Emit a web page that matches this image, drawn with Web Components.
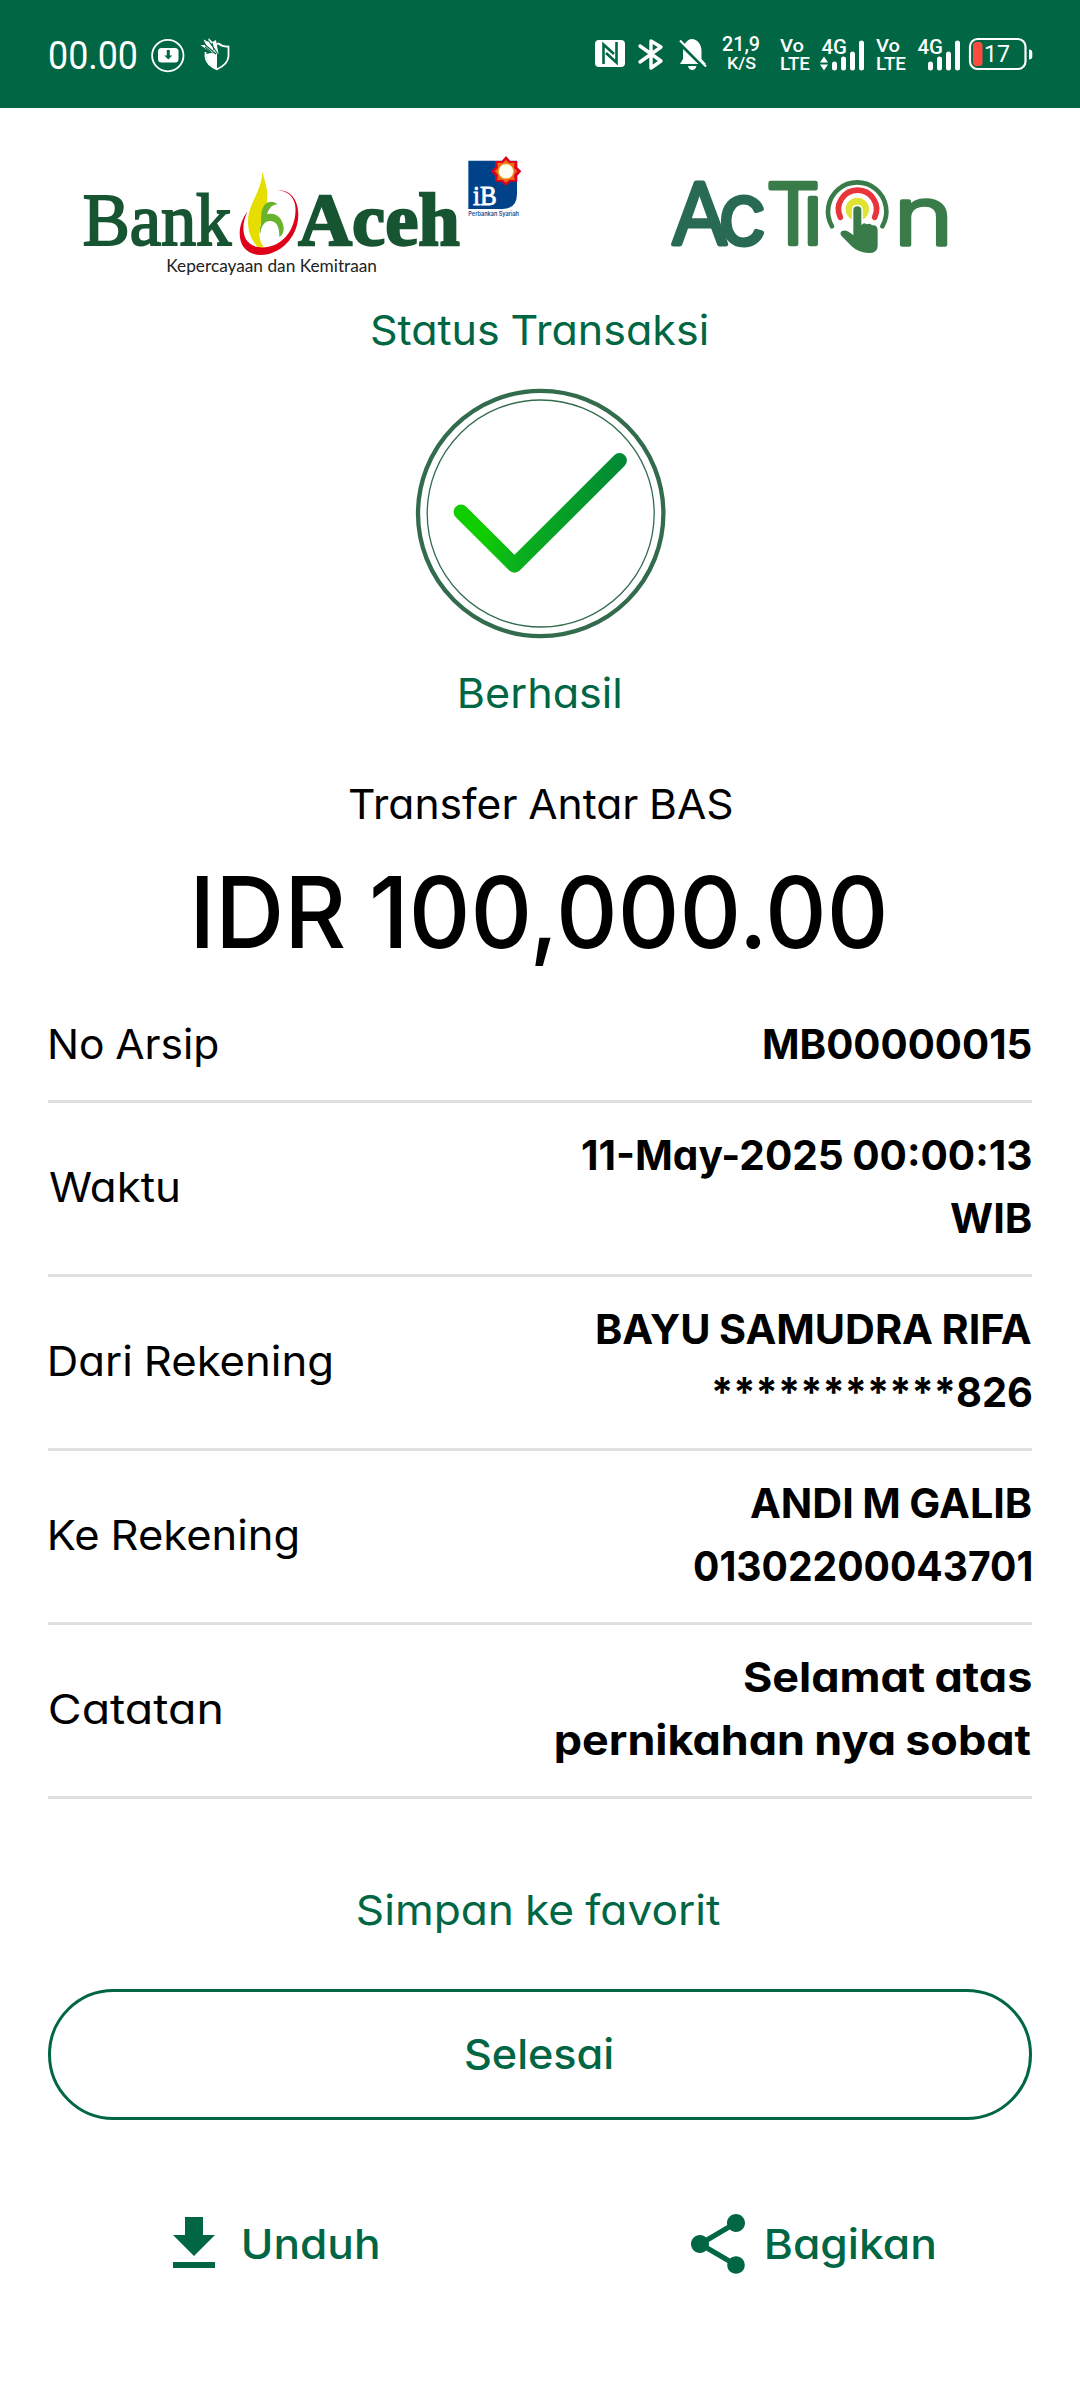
<!DOCTYPE html>
<html lang="id">
<head>
<meta charset="utf-8">
<title>Status Transaksi</title>
<style>
html,body{margin:0;padding:0;background:#fff}
body{width:1080px;height:2400px;overflow:hidden;font-family:Inter,"Open Sans",sans-serif;color:#000}
</style>
</head>
<body>
<receipt-page></receipt-page>
<script>
const define=(name,html,ready)=>customElements.define(name,class extends HTMLElement{
  constructor(){super();this.attachShadow({mode:'open'}).innerHTML=html;}
  connectedCallback(){if(ready)ready.call(this,this.shadowRoot);}
});

/* One line of text whose visible ink spans exactly the given width. */
const ctx=document.createElement('canvas').getContext('2d');
class FitLine extends HTMLElement{
  constructor(){
    super();
    this.attachShadow({mode:'open'}).innerHTML=`<style>
      :host{display:block;flex:none;line-height:63px;white-space:nowrap;font-feature-settings:"cv11" 1;word-spacing:-.03em}
      span{display:inline-block;transform-origin:0 0}
    </style><span></span>`;
  }
  connectedCallback(){
    const s=this.shadowRoot.querySelector('span');
    s.textContent=this.getAttribute('text');
    const size=this.getAttribute('size')||'41',weight=this.getAttribute('weight')||'400',w=+this.getAttribute('w');
    this.style.fontSize=size+'px';
    this.style.fontWeight=weight;
    this.style.width=w+'px';
    if(this.hasAttribute('lh'))this.style.lineHeight=this.getAttribute('lh')+'px';
    ctx.font=`${weight} ${size}px Inter, "Open Sans", sans-serif`;
    const m=ctx.measureText(s.textContent),left=-m.actualBoundingBoxLeft;
    const ink=s.offsetWidth-(m.width-m.actualBoundingBoxRight-m.actualBoundingBoxLeft);
    s.style.transform=`scaleX(${w/ink}) translateX(${-left}px)`;
  }
}
customElements.define('fit-line',FitLine);

define('status-bar',`<style>
:host{display:flex;justify-content:space-between;height:108px;background:#006644}
svg{display:block;font-family:Roboto,sans-serif;fill:#fff}
</style>
<svg width="260" height="108" viewBox="0 0 260 108">
 <text x="48" y="69" font-size="38" textLength="90" lengthAdjust="spacingAndGlyphs">00.00</text>
 <circle cx="167.8" cy="55.6" r="15.7" fill="none" stroke="#fff" stroke-width="1.8"/>
 <rect x="158" y="48" width="20.500" height="14.500" rx="3.5"/>
 <path d="M166.8 50h3v5.500h2.4l-3.9 4-3.9-4h2.4z" fill="#006644"/>
 <path d="M205.500 52v5q1 8 11.500 12.300q11-5 11.500-13V46.500q-6 .5-10-3l-2 .7" fill="none" stroke="#fff" stroke-width="1.8" stroke-linejoin="round"/>
 <path d="M206 54l5-1 6 .5V69q-10-4-11-13z"/>
 <path d="M200.500 45l5.500 0-2.500-5.500 5 2.500 0-4 4 4 3.500-2 2.500 14-8-2-6-4z"/>
 <path d="M203 43l13 11M208.500 40.500l9 13M212 43l2 7M205 47l6 5" stroke="#006644" stroke-width="1.100"/>
</svg>
<svg width="520" height="108" viewBox="0 0 520 108">
 <rect x="35" y="40" width="30" height="27" rx="4"/>
 <path d="M43.500 64V44.500L54 54M56.500 42v20.500L46 53" fill="none" stroke="#006644" stroke-width="2.600"/>
 <path d="M80 46l21 15-10 7V41l10 6-21 15" fill="none" stroke="#fff" stroke-width="3.400" stroke-linejoin="round" stroke-linecap="round"/>
 <path d="M120 64l3-5v-8c0-6 4-12 9-12s9.500 5 9.500 12v8l4.500 5zM128 66h8.500q-1 4-4.250 4t-4.250-4z"/>
 <path d="M118.500 41.500L145 67.500" stroke="#006644" stroke-width="4.500"/>
 <path d="M120 40.500L146 66.500" stroke="#fff" stroke-width="2.200"/>
 <g font-weight="500">
 <text x="162" y="51" font-size="20" textLength="38" lengthAdjust="spacingAndGlyphs">21,9</text>
 <text x="167" y="69" font-size="16" textLength="29" lengthAdjust="spacingAndGlyphs">K/S</text>
 <text x="220" y="52" font-size="18.500" textLength="24" lengthAdjust="spacingAndGlyphs">Vo</text>
 <text x="220" y="70" font-size="18.500" textLength="30" lengthAdjust="spacingAndGlyphs">LTE</text>
 <text x="261.500" y="53.500" font-size="20" textLength="25.500" lengthAdjust="spacingAndGlyphs">4G</text>
 <text x="316" y="52" font-size="18.500" textLength="24" lengthAdjust="spacingAndGlyphs">Vo</text>
 <text x="316" y="70" font-size="18.500" textLength="30" lengthAdjust="spacingAndGlyphs">LTE</text>
 <text x="357.500" y="53.500" font-size="20" textLength="25.500" lengthAdjust="spacingAndGlyphs">4G</text>
 </g>
 <path d="M260 62.500h8l-4-6zM260 64.500h8l-4 6z"/>
 <path d="M274.500 64v4M283.500 59v9M292.500 54v14M301.500 43v25M370.500 64v4M379.500 59v9M388.500 54v14M397.500 43v25" stroke="#fff" stroke-width="5" stroke-linecap="round"/>
 <rect x="410" y="39" width="55.500" height="30" rx="7.500" fill="none" stroke="#fff" stroke-width="2.200"/>
 <rect x="413" y="42" width="9.500" height="24" rx="3.500" fill="#fe4a3f"/>
 <path d="M469 49.500q3.300 0 3.300 3v4q0 3-3.300 3z"/>
 <text x="424" y="62" font-size="23" textLength="26" lengthAdjust="spacingAndGlyphs">17</text>
</svg>`);

define('bank-logo',`<style>:host{display:block}svg{display:block}</style>
<svg width="480" height="150" viewBox="0 0 1440 450">
 <g font-family="'Liberation Serif',serif" fill="#175532" stroke="#175532">
 <text x="68" y="315" font-size="222" stroke-width="6" textLength="446" lengthAdjust="spacingAndGlyphs">Bank</text>
 <text x="715" y="315" font-size="222" font-weight="bold" stroke-width="7" textLength="484" lengthAdjust="spacingAndGlyphs">Aceh</text>
 </g>
 <path d="M607 97c4 15 15 40 15 73 0 45-24 75-24 112 0 15 5 30 14 40l-17 2c-20-22-31-48-31-79 0-57 40-85 43-148z" fill="#e5de00"/>
 <path d="M603 255c0-40 2-59 22-68 10-4 20-2 27 6-18 2-26 14-31 30 30-8 51 18 50 46-1 9-5 17-13 22 1-32-9-48-28-48-18 0-28 18-29 40-3-10-2-20 2-28z" fill="#69b32d"/>
 <path d="M651 151c34-4 64 23 64 72 0 70-55 122-113 122-39 0-63-25-63-65 0-24 9-47 23-65-14 30-16 60-4 83 16 27 56 31 92 14 44-24 60-75 56-113-3-29-26-48-55-48z" fill="#df0019"/>
 <text x="319" y="396" font-family="Lato,sans-serif" font-size="50" fill="#222" textLength="632" lengthAdjust="spacingAndGlyphs">Kepercayaan dan Kemitraan</text>
 <path d="M1225 62h146v100q0 45-44 45h-102z" fill="#004289"/>
 <path d="M1338 48l13 15h21v19l12 12-12 13v18h-21l-13 13-13-13h-20v-18l-12-13 12-12v-19h20z" fill="#e0001b"/>
 <path d="M1338 59l10 10 16-1-2 16 10 10-10 10 2 16-16-1-10 10-10-10-16 1 2-16-10-10 10-10-2-16 16 1z" fill="#ec6b18"/>
 <circle cx="1338" cy="94" r="23" fill="#fffef1" stroke="#f3a21b" stroke-width="3"/>
 <text x="1239" y="195" font-family="'Liberation Serif',serif" font-size="84" fill="#fff" stroke="#fff" stroke-width="2.500" textLength="71" lengthAdjust="spacingAndGlyphs">iB</text>
 <text x="1225" y="228" font-family="Inter,sans-serif" font-weight="600" font-size="17" fill="#1d4d8d" textLength="152" lengthAdjust="spacingAndGlyphs">Perbankan Syariah</text>
</svg>`);

define('action-logo',`<style>:host{display:block}svg{display:block}text{font-family:Inter,sans-serif;font-weight:300;stroke-linejoin:round}</style>
<svg width="340" height="130" viewBox="0 0 1020 390">
 <text x="94 236" y="283" font-size="253" fill="#286a54" stroke="#286a54" stroke-width="15">Ac</text>
 <text x="379 489" y="283" font-size="253" fill="#3a7c49" stroke="#3a7c49" stroke-width="14">Tı</text>
 <text x="761" y="284" font-size="243" fill="#3a7c49" stroke="#3a7c49" stroke-width="11" textLength="179" lengthAdjust="spacingAndGlyphs">n</text>
 <g fill="none" stroke-linecap="round">
 <path d="M576 229A87.500 87.500 0 1 1 727 229" stroke="#3a7c49" stroke-width="14"/>
 <path d="M601 202A57 57 0 1 1 704 202" stroke="#e93439" stroke-width="17"/></g>
 <circle cx="652" cy="178" r="35" fill="#e0e333"/>
 <path d="M640 256v-76q0-11 12-11t12 11v46q7-10 16-3 9-4 16 3 17-2 17 16v45q0 22-26 22-31 0-52-20l-31-32q-6-9 2-14 13-7 34 13z" fill="#3a7c49" stroke="#fff" stroke-width="9" paint-order="stroke"/>
</svg>`);

define('success-mark',`<style>:host{display:block;height:253px}svg{display:block}</style>
<svg width="254" height="253" viewBox="413.500 387 254 253" fill="none">
 <defs><linearGradient id="d" gradientUnits="userSpaceOnUse" x1="490" y1="520" x2="620" y2="520" gradientTransform="rotate(14 540 513)"><stop stop-color="#10cd00"/><stop offset=".25" stop-color="#0bb41a"/><stop offset="1" stop-color="#008239"/></linearGradient></defs>
 <circle cx="540.200" cy="513.500" r="122.700" stroke="#336b4d" stroke-width="4.300"/>
 <circle cx="540.200" cy="513.500" r="113.500" stroke="#336b4d" stroke-width="1.300"/>
 <path d="M460.500 512l53.500 53.300 105-104.800" stroke="url(#d)" stroke-width="14.800" stroke-linecap="round" stroke-linejoin="round"/>
</svg>`);

define('detail-row',`<style>
:host{display:flex;justify-content:space-between;align-items:center;padding:21px 0 24px;border-bottom:3px solid #e0e0e0}
.label{padding-left:2px}
.value{display:flex;flex-direction:column;align-items:flex-end;padding-right:1px}
</style><div class="label"><slot name="label"></slot></div><div class="value"><slot></slot></div>`);

define('pill-button',`<style>
:host{display:flex;box-sizing:border-box;height:131px;border:3px solid #006644;border-radius:66px;align-items:center;justify-content:center;color:#006644;padding-right:2px}
</style><slot></slot>`);

define('icon-action',`<style>
:host{display:flex;flex:1;align-items:center;justify-content:center;gap:13.500px;color:#006644;padding-right:4px;box-sizing:border-box}
svg{display:block;width:72px;height:72px;fill:currentColor}
</style><svg viewBox="0 0 24 24"><path/></svg><slot></slot>`,function(r){
  r.querySelector('path').setAttribute('d',{
    download:'M19 9h-4V3H9v6H5l7 7 7-7zM5 18v2h14v-2H5z',
    share:'M18 16.080c-.76 0-1.440.3-1.960.77L8.910 12.700c.05-.23.09-.46.09-.7s-.04-.47-.09-.7l7.050-4.110c.54.5 1.250.81 2.040.81 1.660 0 3-1.340 3-3s-1.340-3-3-3-3 1.340-3 3c0 .24.04.47.09.7L8.040 9.810C7.500 9.310 6.790 9 6 9c-1.660 0-3 1.340-3 3s1.340 3 3 3c.79 0 1.500-.31 2.040-.81l7.120 4.160c-.05.21-.08.43-.08.65 0 1.610 1.310 2.920 2.920 2.920s2.920-1.310 2.920-2.920-1.310-2.920-2.920-2.920z'
  }[this.getAttribute('icon')]);
});

define('receipt-page',`<style>
:host{display:flex;flex-direction:column;width:1080px;height:2400px;background:#fff}
header{display:flex;height:191px;box-sizing:border-box;padding:32px 100px 0 60px;justify-content:space-between}
action-logo{margin-top:10px}
.status{display:flex;flex-direction:column;align-items:center;color:#006644}
.status>fit-line{margin-right:1px}
success-mark{margin:25px 0 22px 1px}
.amount{display:flex;flex-direction:column;align-items:center;margin-top:48px;gap:16px}
.amount>fit-line{margin-right:1px}
.details{display:flex;flex-direction:column;margin:20px 48px 0}
.foot{display:flex;flex-direction:column;margin:80px 48px 0;color:#006644}
.foot>fit-line{align-self:center;margin:0 2px 47px 0}
nav{display:flex;margin-top:88px}
</style>
<status-bar></status-bar>
<header><bank-logo></bank-logo><action-logo></action-logo></header>
<section class="status">
 <fit-line text="Status Transaksi" w="335"></fit-line>
 <success-mark></success-mark>
 <fit-line text="Berhasil" w="160"></fit-line>
</section>
<section class="amount">
 <fit-line text="Transfer Antar BAS" w="382"></fit-line>
 <fit-line text="IDR 100,000.00" size="99" weight="500" lh="120" w="688"></fit-line>
</section>
<section class="details">
 <detail-row><fit-line slot="label" text="No Arsip" w="168"></fit-line>
  <fit-line text="MB00000015" weight="700" w="267"></fit-line></detail-row>
 <detail-row><fit-line slot="label" text="Waktu" w="129"></fit-line>
  <fit-line text="11-May-2025 00:00:13" weight="700" w="449"></fit-line><fit-line text="WIB" weight="700" w="81"></fit-line></detail-row>
 <detail-row><fit-line slot="label" text="Dari Rekening" w="281"></fit-line>
  <fit-line text="BAYU SAMUDRA RIFA" weight="700" w="434"></fit-line><fit-line text="***********826" weight="700" w="317"></fit-line></detail-row>
 <detail-row><fit-line slot="label" text="Ke Rekening" w="247"></fit-line>
  <fit-line text="ANDI M GALIB" weight="700" w="281"></fit-line><fit-line text="01302200043701" weight="700" w="337"></fit-line></detail-row>
 <detail-row><fit-line slot="label" text="Catatan" w="172"></fit-line>
  <fit-line text="Selamat atas" weight="700" w="287"></fit-line><fit-line text="pernikahan nya sobat" weight="700" w="475"></fit-line></detail-row>
</section>
<section class="foot">
 <fit-line text="Simpan ke favorit" w="362"></fit-line>
 <pill-button><fit-line text="Selesai" weight="500" w="146"></fit-line></pill-button>
</section>
<nav>
 <icon-action icon="download"><fit-line text="Unduh" weight="500" w="134"></fit-line></icon-action>
 <icon-action icon="share"><fit-line text="Bagikan" weight="500" w="167"></fit-line></icon-action>
</nav>`);
</script>
</body>
</html>
